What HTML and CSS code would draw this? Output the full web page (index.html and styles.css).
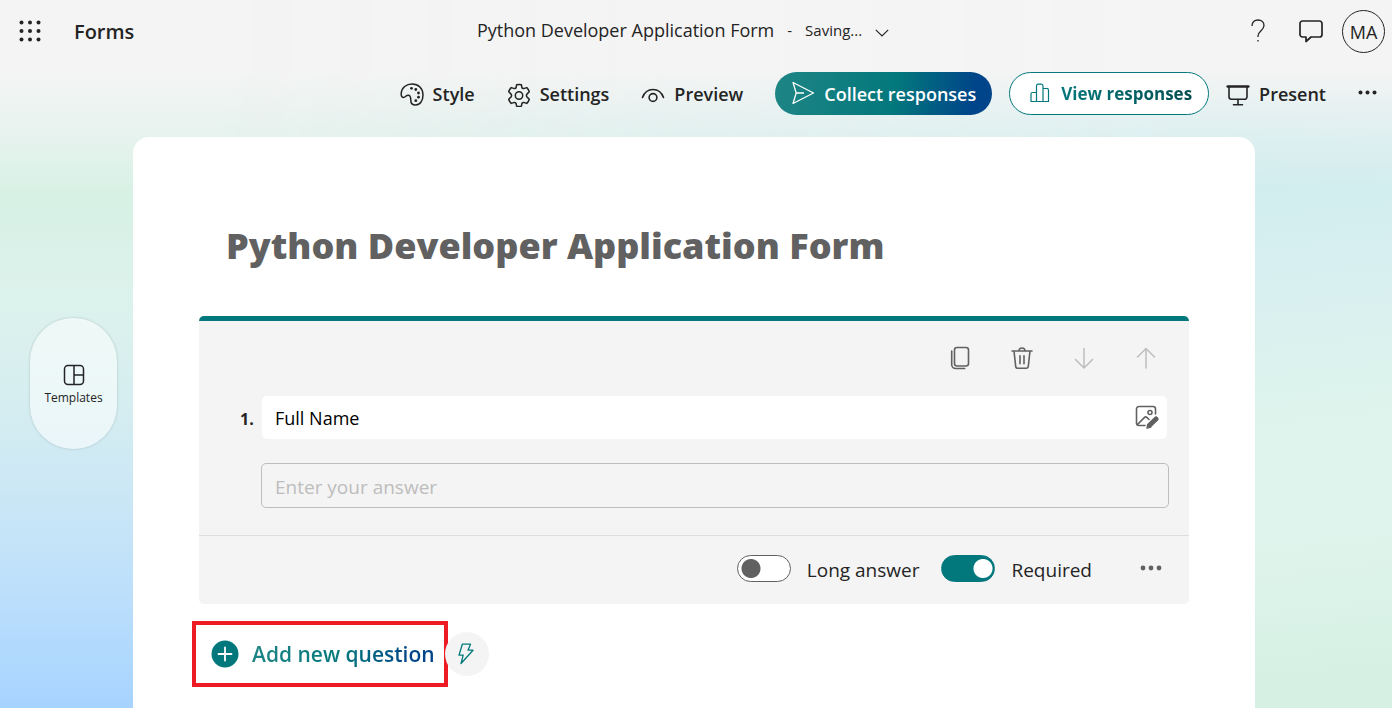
FILE: index.html
```html
<!DOCTYPE html>
<html lang="en">
<head>
<meta charset="utf-8">
<meta name="viewport" content="width=device-width, initial-scale=1">
<title>Python Developer Application Form</title>
<link rel="stylesheet" href="styles.css">
</head>
<body>
<header class="header">
  <div class="brand">
    <button class="icon-button" type="button" aria-label="App launcher">
      <svg width="22" height="22" viewBox="0 0 22 22" fill="currentColor"><circle cx="2.500" cy="2.500" r="2"/><circle cx="11" cy="2.500" r="2"/><circle cx="19.500" cy="2.500" r="2"/><circle cx="2.500" cy="11" r="2"/><circle cx="11" cy="11" r="2"/><circle cx="19.500" cy="11" r="2"/><circle cx="2.500" cy="19.500" r="2"/><circle cx="11" cy="19.500" r="2"/><circle cx="19.500" cy="19.500" r="2"/></svg>
    </button>
    <span class="brand-name">Forms</span>
  </div>
  <div class="document">
    <span class="document-name">Python Developer Application Form</span>
    <span class="document-status">-</span>
    <span class="document-status">Saving...</span>
    <button class="icon-button" type="button" aria-label="Document details">
      <svg width="14" height="14" viewBox="0 0 14 14" fill="none" stroke="currentColor" stroke-width="1.200"><path d="M.8 6.800 7 13l6.200-6.200"/></svg>
    </button>
  </div>
  <div class="account">
    <button class="icon-button" type="button" aria-label="Help">
      <svg width="14" height="24" viewBox="0 0 14 24" fill="none" stroke="currentColor" stroke-width="1.300"><path d="M1 7C1 3.200 3.500 1 7 1s6 2.200 6 5.500c0 5-6 5.500-6 10.500v1"/><path d="M7 21v1.600"/></svg>
    </button>
    <button class="icon-button" type="button" aria-label="Feedback">
      <svg width="24" height="23" viewBox="0 0 24 23" fill="none" stroke="currentColor" stroke-width="1.700" stroke-linejoin="round"><path d="M3.500 1h17A2.500 2.500 0 0 1 23 3.500v11a2.500 2.500 0 0 1-2.500 2.500H12l-5 4.500V17H3.500A2.500 2.500 0 0 1 1 14.500v-11A2.500 2.500 0 0 1 3.500 1z"/></svg>
    </button>
    <button class="avatar" type="button" aria-label="Account">MA</button>
  </div>
</header>

<nav class="toolbar" aria-label="Form actions">
  <button class="tool" type="button">
    <svg width="24" height="26" viewBox="0 0 24 26" fill="none" stroke="currentColor" stroke-width="1.500" stroke-linejoin="round"><g transform="translate(0 2)"><path d="M1.200 11.500C1.500 5.500 6.500 2 12 2c6.500 0 11 4.500 11 11 0 6-3 10-7.500 10-3.300 0-4.700-2-4.700-4.800 0-3.400-.4-5-2.500-5-2.300 0-3.300 2.300-5 2.300-1.500 0-2.200-1.500-2.100-4z"/><g fill="currentColor" stroke="none"><circle cx="11.500" cy="6.300" r="1.400"/><circle cx="15.800" cy="7.500" r="1.400"/><circle cx="18.500" cy="11" r="1.400"/><circle cx="18.500" cy="15.200" r="1.400"/><circle cx="15.800" cy="18.700" r="1.400"/></g></g></svg>
    <span>Style</span>
  </button>
  <button class="tool" type="button">
    <svg width="24" height="28" viewBox="0 0 24 28" fill="none" stroke="currentColor" stroke-width="1.500" stroke-linejoin="round"><g transform="translate(0 4)"><path d="M9.600 1.800q2.400-.7 4.800 0l.5 2.700q.2 1.100 1.400 1.100l1-.2 2.500-.8q1.800 1.800 2.500 4.200l-1.900 1.800q-1 1-1 1.900t1 1.900l1.900 1.800q-.7 2.400-2.500 4.200l-2.500-.8-1-.2q-1.200 0-1.400 1.100l-.5 2.700q-2.400.7-4.800 0l-.5-2.700q-.2-1.100-1.400-1.100l-1 .2-2.500.8q-1.800-1.800-2.500-4.200l1.900-1.800q1-1 1-1.900t-1-1.900L1.700 8.800q.7-2.400 2.500-4.200l2.500.8 1 .2q1.200 0 1.400-1.100z"/><circle cx="12" cy="12.500" r="3.700"/></g></svg>
    <span>Settings</span>
  </button>
  <button class="tool" type="button">
    <svg width="24" height="26" viewBox="0 0 24 26" fill="none" stroke="currentColor" stroke-width="1.600" stroke-linecap="round"><path d="M1.500 17.500C3.500 12 7.500 9.500 12 9.500s8.500 2.500 10.500 8"/><circle cx="12" cy="17.500" r="3.900"/></svg>
    <span>Preview</span>
  </button>
  <button class="tool pill pill-primary" type="button">
    <svg width="24" height="24" viewBox="0 0 24 24" fill="none" stroke="currentColor" stroke-width="1.300" stroke-linejoin="round"><path d="M2 1.500 22.500 12 2 22.500 5.200 12zM5.200 12H13"/></svg>
    <span>Collect responses</span>
  </button>
  <button class="tool pill pill-outline" type="button">
    <svg width="20" height="20" viewBox="0 0 20 20" fill="none" stroke="currentColor" stroke-width="1.200" stroke-linejoin="round"><path d="M1 18.500V11a1.500 1.500 0 0 1 1.500-1.500h4v9zM6.500 18.500V3a1.800 1.800 0 0 1 1.800-1.800h3A1.800 1.800 0 0 1 13 3v15.500zM13 5.500h3.500A1.800 1.800 0 0 1 18.500 7v11.500H13z"/></svg>
    <span>View responses</span>
  </button>
  <button class="tool" type="button">
    <svg width="24" height="28" viewBox="0 0 24 28" fill="none" stroke="currentColor" stroke-width="1.600" stroke-linecap="round"><g transform="translate(0 3)"><path d="M1.700 4.500h20.600" stroke-width="2.600"/><path d="M3 5v9.800a2.500 2.500 0 0 0 2.500 2.500h13a2.500 2.500 0 0 0 2.500-2.500V5M12 17.300v5M7.500 22.700h9"/></g></svg>
    <span>Present</span>
  </button>
  <button class="icon-button" type="button" aria-label="More actions">
    <svg width="19" height="6" viewBox="0 0 19 6" fill="currentColor"><circle cx="2.500" cy="2.500" r="2"/><circle cx="9.500" cy="2.500" r="2"/><circle cx="16.500" cy="2.500" r="2"/></svg>
  </button>
</nav>

<div class="workspace">
  <aside class="side">
    <button class="templates" type="button">
      <svg width="22" height="22" viewBox="0 0 22 22" fill="none" stroke="currentColor" stroke-width="1.500"><rect x="1.500" y="1.500" width="19" height="19" rx="3.500"/><path d="M11 1.500v19M11 11h9.500"/></svg>
      <span>Templates</span>
    </button>
  </aside>

  <main class="sheet">
    <h1 class="form-title">Python Developer Application Form</h1>

    <section class="question" aria-label="Question 1">
      <div class="question-tools">
        <button class="icon-button" type="button" aria-label="Copy question">
          <svg width="24" height="24" viewBox="0 0 24 24" fill="none" stroke="currentColor" stroke-width="1.600" stroke-linecap="round"><rect x="6.500" y="1.500" width="14" height="18.500" rx="2.500"/><path d="M3.700 5v13.500A4 4 0 0 0 7.700 22.500h9"/></svg>
        </button>
        <button class="icon-button" type="button" aria-label="Delete question">
          <svg width="24" height="24" viewBox="0 0 24 24" fill="none" stroke="currentColor" stroke-width="1.600" stroke-linecap="round" stroke-linejoin="round"><path d="M2 5h20M9 5a3 3 0 0 1 6 0M4 5l1.700 15.300a2.200 2.200 0 0 0 2.200 2h8.200a2.200 2.200 0 0 0 2.200-2L20 5M10 9.800v8M14 9.800v8"/></svg>
        </button>
        <button class="icon-button" type="button" aria-label="Move question down" disabled>
          <svg width="24" height="24" viewBox="0 0 24 24" fill="none" stroke="currentColor" stroke-width="1.500" stroke-linecap="round"><path d="M12 2.500V22M3.500 13.500 12 22l8.500-8.500"/></svg>
        </button>
        <button class="icon-button" type="button" aria-label="Move question up" disabled>
          <svg width="24" height="24" viewBox="0 0 24 24" fill="none" stroke="currentColor" stroke-width="1.500" stroke-linecap="round"><path d="M12 22V2.500M3.500 11 12 2.500 20.500 11"/></svg>
        </button>
      </div>

      <div class="question-row">
        <label class="question-number" for="question-text">1.</label>
        <div class="question-field">
          <input class="question-input" id="question-text" type="text" value="Full Name">
          <button class="icon-button" type="button" aria-label="Insert media">
            <svg width="24" height="26" viewBox="0 0 24 26" fill="none" stroke="currentColor" stroke-width="1.600" stroke-linecap="round"><path d="M20.500 9V4A2.500 2.500 0 0 0 18 1.500H4A2.500 2.500 0 0 0 1.500 4v14A2.500 2.500 0 0 0 4 20.500h6M2.500 19.500 9.300 12.600a2 2 0 0 1 2.800 0l1.900 1.900"/><circle cx="15" cy="7.500" r="2"/><path d="M14.500 20.200 21 14" stroke-width="5"/><path d="m11.800 23 1-4 3 3z" fill="currentColor" stroke-width="1"/></svg>
          </button>
        </div>
      </div>

      <div class="answer-row">
        <input class="answer-input" type="text" placeholder="Enter your answer" aria-label="Answer" readonly>
      </div>

      <div class="question-footer">
        <label class="switch"><input class="switch-input" type="checkbox" role="switch"><span>Long answer</span></label>
        <label class="switch"><input class="switch-input" type="checkbox" role="switch" checked><span>Required</span></label>
        <button class="icon-button more" type="button" aria-label="More question settings">
          <svg width="22" height="8" viewBox="0 0 22 8" fill="currentColor"><circle cx="3" cy="3" r="2.400"/><circle cx="11" cy="3" r="2.400"/><circle cx="19" cy="3" r="2.400"/></svg>
        </button>
      </div>
    </section>

    <div class="add-row">
      <button class="add-question" type="button">
        <svg width="28" height="28" viewBox="0 0 28 28"><circle cx="14" cy="14" r="13.500" fill="#03787c"/><path d="M14 7.500v13M7.500 14h13" stroke="#fff" stroke-width="1.800" stroke-linecap="round"/></svg>
        <span>Add new question</span>
      </button>
      <button class="quick-add" type="button" aria-label="Suggested questions">
        <svg width="16" height="22" viewBox="0 0 16 22" fill="none" stroke="currentColor" stroke-width="1.300" stroke-linejoin="round"><path d="M4.300 1.200h8.200L10 7.200h5L3 20.500l2.200-8.300H1z"/></svg>
      </button>
    </div>
  </main>
</div>
</body>
</html>
```
FILE: styles.css
```css
* {
  box-sizing: border-box;
}

body {
  margin: 0;
  min-height: 100vh;
  display: flex;
  flex-direction: column;
  color: #242424;
  font-family: "Open Sans", "Noto Sans", sans-serif;
  font-size: 18px;
  line-height: 24px;
  background:
    linear-gradient(#f4f4f4 70px, rgba(244, 244, 244, 0) 190px),
    linear-gradient(#dcf2e9 20%, #d7f1e5 28%, #dcf2ec 42%, #d6eef0 56%, #cde8f5 68%, #bcdffb 84%, #a6d3ff);
}

/* Right-hand backdrop, faded into the left one behind the sheet. */
body::before {
  content: "";
  position: absolute;
  inset: 0;
  z-index: -1;
  background:
    linear-gradient(#f4f4f4 70px, rgba(244, 244, 244, 0) 190px),
    linear-gradient(174deg, #c7eaec 20%, #cbebec 30%, #d7eff1 46%, #ddf3ec 64%, #dff4ec 78%, #d6f1e4 96%);
  mask-image: linear-gradient(90deg, transparent 15%, #000 85%);
}

button,
input {
  font: inherit;
  color: inherit;
}

button {
  display: inline-flex;
  align-items: center;
  justify-content: center;
  border: 0;
  padding: 0;
  background: none;
  white-space: nowrap;
}

svg {
  display: block;
  flex: none;
}

.icon-button:disabled {
  color: #bdbdbd;
}

.header {
  display: grid;
  grid-template-columns: 1fr auto 1fr;
  align-items: center;
  height: 62px;
  padding: 0 7px 0 19px;
}

.brand {
  display: flex;
  align-items: center;
  gap: 33px;
}

.brand-name {
  padding-top: 2px;
  font-size: 20px;
  font-weight: 600;
}

.document {
  display: flex;
  align-items: center;
  gap: 13px;
  padding: 0 38px 2px 0;
}

.document-name {
  font-size: 18px;
}

.document-status {
  font-size: 15px;
}

.account {
  display: flex;
  align-items: center;
  justify-content: flex-end;
  gap: 34px;
}

.avatar {
  width: 43px;
  height: 43px;
  margin-left: -15px;
  padding-top: 2px;
  border: 1px solid #242424;
  border-radius: 50%;
}

.toolbar {
  display: flex;
  align-items: center;
  justify-content: flex-end;
  gap: 32px;
  height: 62px;
  padding-right: 15px;
}

.tool {
  gap: 9px;
  font-weight: 600;
}

.tool span {
  padding-top: 2px;
}

.pill {
  height: 43px;
  padding: 0 16px;
  border-radius: 22px;
}

.pill-primary {
  color: #fff;
  background: linear-gradient(100deg, #1f8585, #03787c 55%, #004589 90%);
}

.pill-outline {
  gap: 11px;
  margin: 0 -15px;
  padding: 0 16px 0 20px;
  border: 1px solid #03787c;
  color: #03787c;
  background: #fff;
}

.pill-outline span {
  font-size: 17px;
  font-weight: 700;
  color: transparent;
  background: linear-gradient(90deg, #03787c, #054e50);
  background-clip: text;
}

.workspace {
  flex: 1;
  display: grid;
  grid-template-columns: 133px 1fr 137px;
  padding-top: 13px;
}

.side {
  padding: 181px 0 0 30px;
}

.templates {
  flex-direction: column;
  gap: 2px;
  width: 87px;
  height: 131px;
  padding-top: 4px;
  border-radius: 44px;
  background: rgba(255, 255, 255, 0.55);
  box-shadow: 0 0 3px rgba(0, 0, 0, 0.18);
  font-size: 12px;
  line-height: 20px;
}

.sheet {
  padding: 79px 66px 21px;
  border-radius: 16px 16px 0 0;
  background: #fff;
}

.form-title {
  margin: 0 27px 40px;
  color: #616161;
  font-size: 36px;
  font-weight: 800;
  line-height: 60px;
}

.question {
  border-top: 5px solid #03787c;
  border-radius: 5px;
  background: #f4f4f4;
}

.question-tools {
  display: flex;
  justify-content: flex-end;
  gap: 38px;
  padding: 25px 31px 26px;
  color: #616161;
}

.question-row {
  display: flex;
  align-items: center;
  padding: 0 22px 24px 41px;
}

.question-number {
  width: 22px;
  padding-top: 2px;
  font-weight: 700;
  font-size: 16px;
}

.question-field {
  flex: 1;
  display: flex;
  align-items: center;
  height: 43px;
  padding: 0 8px 0 13px;
  border-radius: 5px;
  color: #616161;
  background: #fff;
}

.question-input {
  flex: 1;
  min-width: 0;
  padding: 0;
  border: 0;
  outline: 0;
  color: #000;
  background: none;
}

.answer-row {
  padding: 0 20px 27px 62px;
}

.answer-input {
  display: block;
  width: 100%;
  height: 45px;
  padding: 2px 13px 0;
  border: 1px solid #bdbdbd;
  border-radius: 5px;
  outline: 0;
  background: none;
  font-size: 19px;
}

.answer-input::placeholder {
  color: #bdbdbd;
  opacity: 1;
}

.question-footer {
  display: flex;
  align-items: center;
  justify-content: flex-end;
  gap: 22px;
  height: 69px;
  padding: 0 27px 3px 0;
  border-top: 1px solid #dedede;
  font-size: 19px;
}

.switch {
  display: flex;
  align-items: center;
  gap: 16px;
}

.switch span {
  padding-top: 3px;
}

.switch-input {
  appearance: none;
  width: 54px;
  height: 27px;
  margin: 0;
  border: 1px solid #616161;
  border-radius: 14px;
  background: radial-gradient(circle at 13px 50%, #616161 9px, #fff 10px);
}

.switch-input:checked {
  border-color: #03787c;
  background: radial-gradient(circle at 41px 50%, #fff 9px, #03787c 10px);
}

.more {
  margin-left: 26px;
  color: #616161;
}

.add-row {
  display: flex;
  align-items: center;
  margin: 17px 0 0 -7px;
}

.add-question {
  gap: 13px;
  height: 66px;
  padding: 0 9px 0 15px;
  border: 4px solid #ed1c24;
  font-size: 21px;
  font-weight: 600;
}

.add-question span {
  line-height: 32px;
  color: transparent;
  background: linear-gradient(100deg, #1f8585, #03787c 50%, #004589 85%);
  background-clip: text;
}

.quick-add {
  width: 44px;
  height: 44px;
  margin-left: -3px;
  padding-right: 2px;
  border-radius: 50%;
  color: #03787c;
  background: #f4f4f4;
}
```
